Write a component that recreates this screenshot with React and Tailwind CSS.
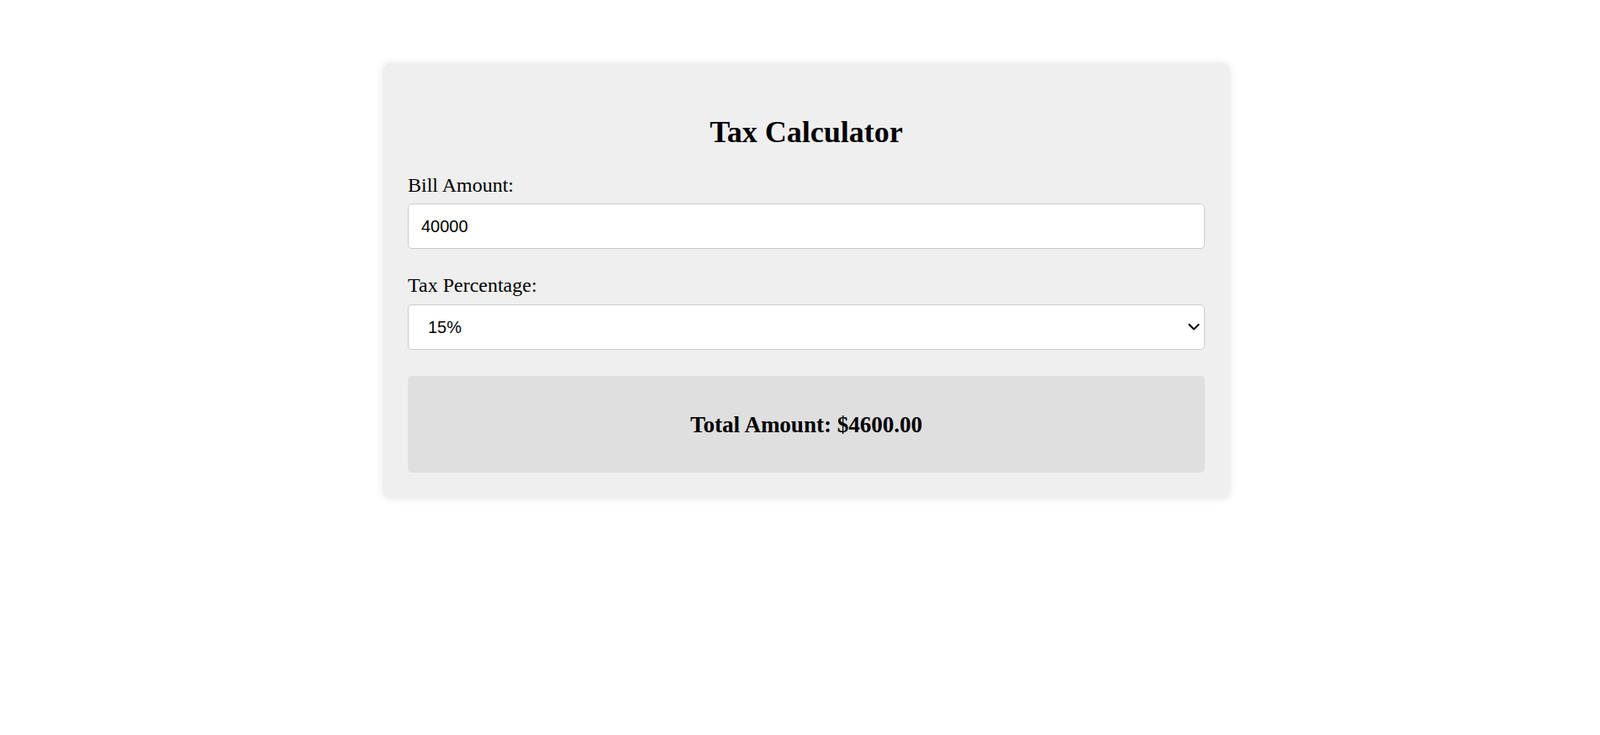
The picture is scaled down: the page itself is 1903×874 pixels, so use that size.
import React, { useState } from 'react';

const App = () => {
    const [bill, setBill] = useState('40000');
    const [tax, setTax] = useState('15');
    // snapshot value as shown in the app
    const total = '4600.00';

    return (
        <div className="min-h-screen bg-white flex justify-center pl-[15px] pt-[75px]">
            <div className="w-[1008px] self-start bg-[#efefef] rounded-[10px] shadow-[0_0_10px_rgba(0,0,0,0.1)] px-[30px] pt-[30px] pb-[31px] font-['Liberation_Serif',serif] text-black">
                <h1 className="mt-[32px] mb-[29px] text-center text-[36px] leading-[40px] font-bold">Tax Calculator</h1>

                <label className="block text-[24px] leading-[28px] mb-[8px]">Bill Amount:</label>
                <input
                    type="text"
                    value={bill}
                    onChange={(e) => setBill(e.target.value)}
                    className="block w-full h-[54px] bg-white border border-[#cccccc] rounded-[5px] px-[15px] text-[20px] text-black font-['Liberation_Sans',Arial,sans-serif] outline-none"
                />

                <label className="block text-[24px] leading-[28px] mt-[29px] mb-[9px]">Tax Percentage:</label>
                <div className="relative">
                    <select
                        value={tax}
                        onChange={(e) => setTax(e.target.value)}
                        className="block w-full h-[54px] appearance-none bg-white border border-[#cccccc] rounded-[5px] pl-[23px] pr-[40px] text-[20px] text-black font-['Liberation_Sans',Arial,sans-serif] outline-none"
                    >
                        <option value="5">5%</option>
                        <option value="10">10%</option>
                        <option value="15">15%</option>
                        <option value="20">20%</option>
                    </select>
                    <svg className="absolute right-[6px] top-1/2 -translate-y-1/2 pointer-events-none" width="14" height="9" viewBox="0 0 14 9" fill="none">
                        <path d="M1.5 1.5 L7 7 L12.5 1.5" stroke="#111" strokeWidth="2.2" strokeLinecap="round" strokeLinejoin="round" />
                    </svg>
                </div>

                <div className="mt-[31px] h-[115px] bg-[#dfdfdf] rounded-[5px] flex items-center justify-center">
                    <h3 className="text-[27px] leading-[30px] font-bold">Total Amount: ${total}</h3>
                </div>
            </div>
        </div>
    );
};

export default App;
